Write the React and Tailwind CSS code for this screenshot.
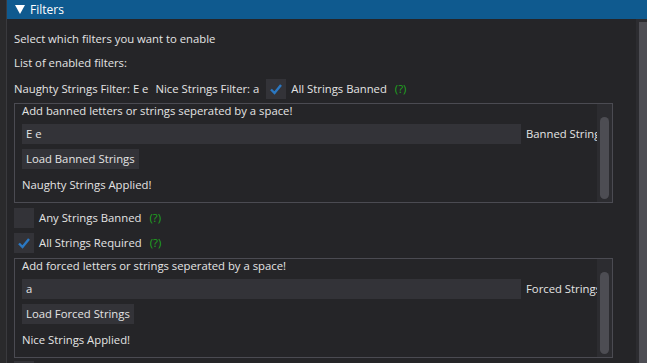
import React from "react";

function Check({ checked }) {
  return (
    <div className="w-[20px] h-[20px] bg-[#333338] flex items-center justify-center shrink-0">
      {checked && (
        <svg width="14" height="14" viewBox="0 0 14 14">
          <path d="M2 7.5 L5.5 11 L12 3" fill="none" stroke="#2b78c2" strokeWidth="2.4" />
        </svg>
      )}
    </div>
  );
}

function Help() {
  return <span className="text-[#1fa51f] ml-[8px]">(?)</span>;
}

function Child({ label, value, side, button, status }) {
  return (
    <div className="w-[599px] h-[100px] shrink-0 border border-[#4b4b52] ml-[7px] flex overflow-hidden">
      <div className="w-[582px] shrink-0 flex flex-col pl-[7px] overflow-hidden">
        <div className="h-[14px] leading-[13px] shrink-0">{label}</div>
        <div className="h-[6px] shrink-0" />
        <div className="flex items-center h-[20px] shrink-0 whitespace-nowrap">
          <div className="w-[499px] h-[20px] bg-[#333338] pl-[4px] leading-[20px] shrink-0">{value}</div>
          <div className="ml-[5px] shrink-0">{side}</div>
        </div>
        <div className="h-[5px] shrink-0" />
        <div className="h-[20px] shrink-0 bg-[#333338] px-[4px] leading-[20px] self-start">{button}</div>
        <div className="h-[9px] shrink-0" />
        <div className="leading-[13px] shrink-0">{status}</div>
      </div>
      <div className="w-[15px] bg-[#2c2c30] flex justify-center pt-[13px] pb-[3px] shrink-0">
        <div className="w-[9px] h-full rounded-full bg-[#4d4d53]" />
      </div>
    </div>
  );
}

export default function App() {
  return (
    <div
      className="w-[647px] h-[363px] overflow-hidden bg-[#252528] text-[#e4e4e4] text-[11.3px] flex"
      style={{ fontFamily: '"Open Sans", sans-serif' }}
    >
      <div className="w-[7px] h-full bg-[#2a2a2c] border-r border-[#3a3a3e] shrink-0" />
      <div className="w-[640px] flex flex-col">
        <div className="h-[19px] bg-[#0f5a8f] flex items-center shrink-0 text-white text-[12px]">
          <svg className="ml-[8px]" width="10" height="9" viewBox="0 0 10 9">
            <path d="M0 0 H10 L5 9 Z" fill="#ffffff" />
          </svg>
          <span className="ml-[5px]">Filters</span>
        </div>
        <div className="flex-1 flex overflow-hidden">
          <div className="w-[629px] shrink-0 flex flex-col overflow-hidden">
            <div className="h-[13px] shrink-0" />
            <div className="pl-[7px] leading-[13px] shrink-0">Select which filters you want to enable</div>
            <div className="h-[11px] shrink-0" />
            <div className="pl-[7px] leading-[13px] shrink-0">List of enabled filters:</div>
            <div className="h-[10px] shrink-0" />
            <div className="pl-[7px] flex items-center h-[20px] whitespace-nowrap shrink-0">
              <span>Naughty Strings Filter: E e</span>
              <span className="ml-[7px]">Nice Strings Filter: a</span>
              <div className="ml-[7px]"><Check checked /></div>
              <span className="ml-[5px]">All Strings Banned</span>
              <Help />
            </div>
            <div className="h-[4px] shrink-0" />
            <Child
              label="Add banned letters or strings seperated by a space!"
              value="E e"
              side="Banned Strings"
              button="Load Banned Strings"
              status="Naughty Strings Applied!"
            />
            <div className="h-[5px] shrink-0" />
            <div className="pl-[7px] flex items-center h-[20px] shrink-0">
              <Check />
              <span className="ml-[5px]">Any Strings Banned</span>
              <Help />
            </div>
            <div className="h-[5px] shrink-0" />
            <div className="pl-[7px] flex items-center h-[20px] shrink-0">
              <Check checked />
              <span className="ml-[5px]">All Strings Required</span>
              <Help />
            </div>
            <div className="h-[5px] shrink-0" />
            <Child
              label="Add forced letters or strings seperated by a space!"
              value="a"
              side="Forced Strings"
              button="Load Forced Strings"
              status="Nice Strings Applied!"
            />
            <div className="h-[3px] shrink-0" />
            <div className="pl-[7px] shrink-0"><Check /></div>
          </div>
          <div className="w-[11px] bg-[#2c2c30] flex pl-[3px] pt-[3px] shrink-0">
            <div className="flex-1 bg-[#4e4e54]" />
          </div>
        </div>
      </div>
    </div>
  );
}
